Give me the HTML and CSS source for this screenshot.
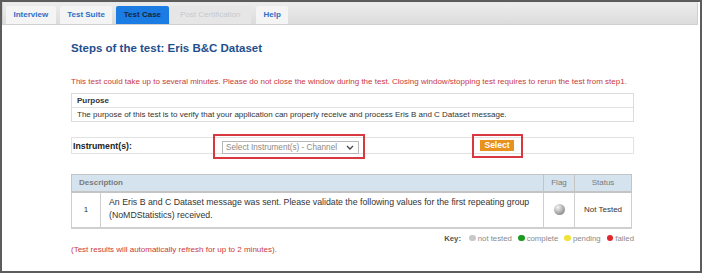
FILE: index.html
```html
<!DOCTYPE html>
<html lang="en">
<head>
    <meta charset="UTF-8">
    <title>Steps of the test: Eris B&amp;C Dataset</title>
    <link rel="stylesheet" href="styles.css">
</head>
<body>
    <div class="frame">
        <div class="tabbar">
            <a class="tab">Interview</a>
            <a class="tab">Test Suite</a>
            <a class="tab active">Test Case</a>
            <a class="tab disabled">Post Certification</a>
            <a class="tab">Help</a>
        </div>

        <div class="content">
            <h1 class="page-title">Steps of the test: Eris B&amp;C Dataset</h1>

            <p class="notice">This test could take up to several minutes. Please do not close the window during the test. Closing window/stopping test requires to rerun the test from step1.</p>

            <div class="purpose">
                <div class="purpose-head">Purpose</div>
                <div class="purpose-body">The purpose of this test is to verify that your application can properly receive and process Eris B and C Dataset message.</div>
            </div>

            <div class="instrument-row">
                <div class="instrument-label">Instrument(s):</div>
                <span class="mark mark-select">
                    <span class="fake-select">Select Instrument(s) - Channel
                        <svg class="chevron" width="8" height="5" viewBox="0 0 8 5"><path d="M1 1 L4 4 L7 1" fill="none" stroke="#444" stroke-width="1.3"/></svg>
                    </span>
                </span>
                <span class="mark mark-button">
                    <button class="select-btn">Select</button>
                </span>
            </div>

            <table class="steps">
                <thead>
                    <tr>
                        <th class="col-desc" colspan="2">Description</th>
                        <th class="col-flag">Flag</th>
                        <th class="col-status">Status</th>
                    </tr>
                </thead>
                <tbody>
                    <tr>
                        <td class="col-num">1</td>
                        <td class="col-text">An Eris B and C Dataset message was sent. Please validate the following values for the first repeating group (NoMDStatistics) received.</td>
                        <td class="col-flag"><span class="ball"></span></td>
                        <td class="col-status">Not Tested</td>
                    </tr>
                </tbody>
            </table>

            <div class="key">
                <b>Key:</b>
                <span class="dot grey"></span>not tested
                <span class="dot green"></span>complete
                <span class="dot yellow"></span>pending
                <span class="dot red"></span>failed
            </div>

            <p class="footnote">(Test results will automatically refresh for up to 2 minutes).</p>
        </div>
    </div>
</body>
</html>
```

FILE: styles.css
```css
* {
    margin: 0;
    padding: 0;
    box-sizing: border-box;
}

body {
    font-family: 'Liberation Sans', Arial, sans-serif;
    color: #333;
    background: white;
}

.frame {
    width: 702px;
    height: 273px;
    border: 2px solid #5c5c5c;
    overflow: hidden;
}

/* tabs */
.tabbar {
    display: flex;
    align-items: flex-end;
    height: 23px;
    margin-right: 2px;
    padding-left: 3px;
    background: linear-gradient(#ececec, #dcdcdc);
    border: 1px solid #d0d0d0;
    border-top-color: #e8e8e8;
}

.tab {
    display: block;
    height: 18px;
    line-height: 18px;
    padding: 0 7.5px;
    margin-right: 4px;
    font-size: 8px;
    font-weight: bold;
    color: #2e6ec4;
    background: #f4f4f4;
    border-radius: 2px 2px 0 0;
}

.tab.active {
    background: #1b7de3;
    color: #17263d;
    margin-right: 1px;
}

.tab.disabled {
    background: #e6e6e6;
    color: #c3cad2;
    font-weight: normal;
    padding: 0 10.5px;
    margin-right: 5px;
}

/* content */
.content {
    padding-left: 69px;
    width: 632px;
}

.page-title {
    margin-top: 16px;
    font-size: 11.5px;
    line-height: 14px;
    color: #1f4f8e;
}

.notice {
    margin-top: 22px;
    font-size: 8px;
    line-height: 10px;
    color: #c93a40;
    white-space: nowrap;
}

.purpose {
    margin-top: 6px;
    border: 1px solid #dcdcdc;
    font-size: 8px;
}

.purpose-head {
    height: 14px;
    line-height: 13px;
    padding-left: 5px;
    font-weight: bold;
    color: #333;
    border-bottom: 1px solid #e2e2e2;
}

.purpose-body {
    height: 13px;
    line-height: 13px;
    padding-left: 5px;
    color: #333;
}

.instrument-row {
    display: flex;
    align-items: center;
    height: 17px;
    margin-top: 15px;
    border: 1px solid #e2e2e2;
    font-size: 8.75px;
}

.instrument-label {
    width: 141px;
    padding-left: 1px;
    font-weight: bold;
    color: #222;
}

.mark {
    display: flex;
    align-items: center;
    border: 2px solid #d8383f;
}

.mark-select {
    width: 152px;
    height: 25px;
    margin: 0 0 -2px 0;
    padding-left: 7px;
}

.fake-select {
    display: flex;
    align-items: center;
    justify-content: space-between;
    width: 137px;
    height: 13px;
    padding: 0 4px 0 3px;
    margin-top: 2px;
    border: 1px solid #b8b8b8;
    font-size: 8.2px;
    color: #8a8a8a;
}

.mark-button {
    width: 51px;
    height: 24px;
    margin-left: 107px;
    padding-left: 6px;
}

.select-btn {
    width: 34px;
    height: 11px;
    border: none;
    background: #e8911c;
    color: white;
    font-family: inherit;
    font-size: 8.5px;
    font-weight: bold;
    line-height: 11px;
}

/* steps table */
.steps {
    width: 561px;
    margin-top: 20px;
    border-collapse: collapse;
    border: 1px solid #c9c9c9;
    font-size: 8.75px;
}

.steps th {
    height: 17px;
    background: #d5e3ee;
    color: #7a7a7a;
    font-weight: normal;
    font-size: 8px;
    border: 1px solid #c4c4c4;
    border-bottom: 2px solid #c4c4c4;
}

.steps th.col-desc {
    text-align: left;
    padding-left: 7px;
    font-weight: bold;
}

.steps td {
    height: 36px;
    border: 1px solid #cfcfcf;
    border-bottom: 2px solid #cfcfcf;
    color: #333;
}

.col-num {
    width: 29px;
    text-align: center;
    font-size: 8px;
}

.col-text {
    padding: 0 8px 2px;
    line-height: 13px;
}

.col-flag {
    width: 31px;
    text-align: center;
}

.steps td.col-status {
    width: 57px;
    text-align: center;
    font-size: 8px;
}

.ball {
    display: inline-block;
    width: 11px;
    height: 11px;
    border-radius: 50%;
    background: radial-gradient(circle at 35% 30%, #f4f4f4, #a3a3a3 60%, #6e6e6e);
    vertical-align: middle;
}

/* key */
.key {
    margin-top: 5px;
    height: 10px;
    line-height: 10px;
    text-align: right;
    font-size: 7.8px;
    color: #8a8a8a;
}

.key b {
    color: #555;
    margin-right: 2px;
}

.dot {
    display: inline-block;
    width: 6.5px;
    height: 6.5px;
    margin: 0 2px 0 4px;
    border-radius: 50%;
    vertical-align: -0.5px;
}

.dot.grey { background: #c8c8c8; }
.dot.green { background: #1c9a22; }
.dot.yellow { background: #eee33a; }
.dot.red { background: #e2262b; }

.footnote {
    margin-top: 1px;
    font-size: 8px;
    line-height: 10px;
    color: #c93a40;
}
```
